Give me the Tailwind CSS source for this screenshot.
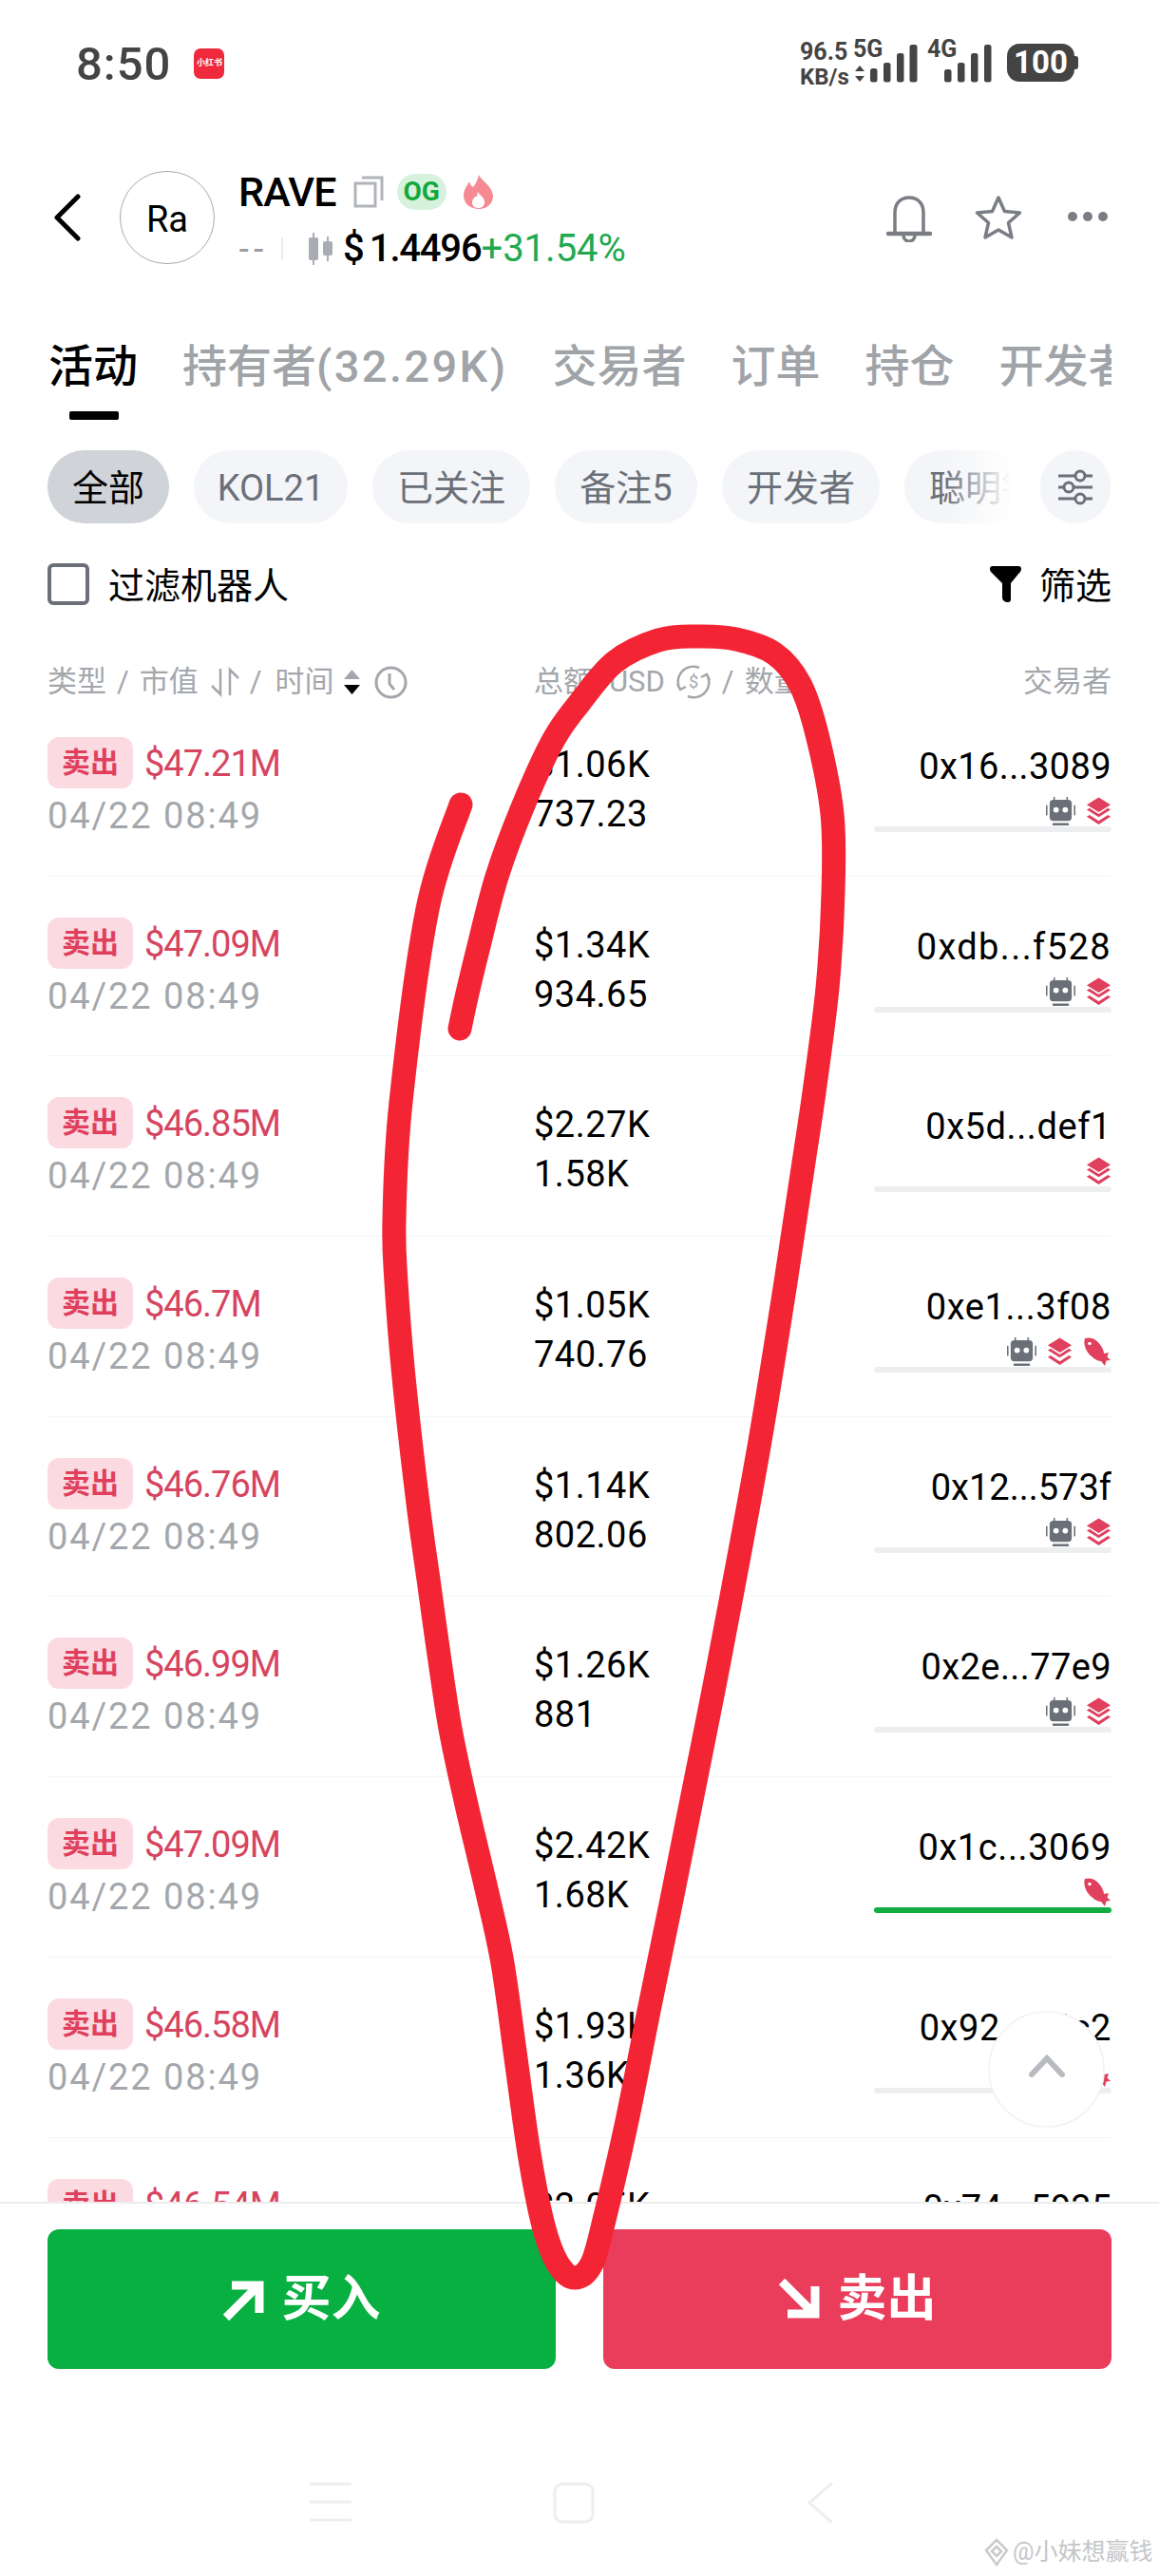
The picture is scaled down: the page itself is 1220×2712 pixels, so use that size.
<!DOCTYPE html>
<html lang="zh-CN">
<head>
  <meta charset="UTF-8" />
  <title>RAVE</title>
  <script src="https://cdn.jsdelivr.net/npm/@tailwindcss/browser@4"></script>
</head>
<body class="bg-white">
<svg class="hidden">
  <symbol id="robot" viewBox="0 0 32 32">
    <path d="M9 0v4M23 0v4" stroke="#6b7078" stroke-width="1.6"/>
    <rect x="4" y="3" width="24" height="23" rx="4" fill="#6b7078"/>
    <rect x="0" y="9" width="1.6" height="11" fill="#6b7078"/><rect x="30.4" y="9" width="1.6" height="11" fill="#6b7078"/>
    <rect x="7" y="28.5" width="18" height="2.5" rx="1" fill="#6b7078"/>
    <circle cx="11" cy="14" r="3" fill="#fff"/><circle cx="21" cy="14" r="3" fill="#fff"/>
  </symbol>
  <symbol id="stack" viewBox="0 0 28 30">
    <path d="M14 0l13 8-13 8L1 8z" fill="#e0405e"/>
    <path d="M1 13.5l3-1.8L14 18l10-6.300 3 1.800-13 8z" fill="#e0405e"/>
    <path d="M1 21l3-1.800L14 25.500l10-6.300 3 1.800-13 8.500z" fill="#e0405e"/>
  </symbol>
  <symbol id="fish" viewBox="0 0 30 30">
    <path d="M2 1C8-1 15 2 19 9c2 3 3 6 3 8l5-1-1.500 4.500L29 24l-4.500.5L23 30l-4-5c-2 0-6-1-10-5C3 15 0 7 2 1z" fill="#e0405e"/>
    <circle cx="7" cy="6.500" r="1.800" fill="#fff"/>
  </symbol>
</svg>

<div class="relative w-[1220px] h-[2712px] overflow-hidden flex flex-col bg-white text-black font-[Roboto,'Noto_Sans_CJK_SC',sans-serif]">

  <!-- Status bar -->
  <div class="h-[130px] shrink-0 flex justify-between pl-[80px] pr-[85px] pt-[42px] text-[#444444]">
    <div class="flex items-start gap-[24px]">
      <span class="text-[49px] leading-[52px] font-medium tracking-[1px]">8:50</span>
      <div class="mt-[9px] w-[32px] h-[32px] rounded-[7px] bg-[#ee2a3c] text-white text-[9px] font-bold flex items-center justify-center whitespace-nowrap">小红书</div>
    </div>
    <div class="flex items-start">
      <div class="w-[56px] text-[25px] leading-[26px] font-bold">
        <div>96.5</div>
        <div class="text-[24px]">KB/s</div>
      </div>
      <div class="w-[78px] relative h-[46px]">
        <span class="absolute left-0 top-0 text-[25px] leading-[20px] font-bold">5G</span>
        <svg class="absolute left-0 top-0" width="68" height="45" viewBox="0 0 68 45" fill="#444444">
          <path d="M7 27l5 6H2zM7 44l5-6H2z"/>
          <rect x="18" y="30" width="7.500" height="14.500" rx="2.500"/><rect x="32" y="24" width="7.500" height="20.500" rx="2.500"/><rect x="46" y="14" width="7.500" height="30.500" rx="2.500"/><rect x="59.500" y="5" width="8" height="39.500" rx="2.500"/>
        </svg>
      </div>
      <div class="w-[84px] relative h-[46px]">
        <span class="absolute left-0 top-0 text-[25px] leading-[20px] font-bold">4G</span>
        <svg class="absolute left-[18px] top-0" width="50" height="45" viewBox="0 0 50 45" fill="#444444">
          <rect x="0" y="31" width="7.500" height="13.500" rx="2.500"/><rect x="14" y="24" width="7.500" height="20.500" rx="2.500"/><rect x="28" y="14" width="7.500" height="30.500" rx="2.500"/><rect x="42" y="5" width="7.500" height="39.500" rx="2.500"/>
        </svg>
      </div>
      <div class="flex items-center mt-[4px]">
        <div class="w-[71px] h-[40px] rounded-[13px] bg-[#444444] text-white text-[33px] leading-[40px] font-bold text-center">100</div>
        <div class="w-[4px] h-[14px] rounded-r-[3px] bg-[#444444]"></div>
      </div>
    </div>
  </div>

  <!-- Token header -->
  <div class="mt-[50px] h-[98px] shrink-0 relative flex pl-[56px] pr-[54px]">
    <svg class="mt-[24px]" width="30" height="50" viewBox="0 0 30 50" fill="none" stroke="#000" stroke-width="5" stroke-linecap="round" stroke-linejoin="round"><path d="M26 3L4 25l22 22"/></svg>
    <div class="ml-[40px] w-[100px] h-[98px] rounded-full border border-[#a9a9a9] flex items-center justify-center pt-[5px] text-[38px]">Ra</div>
    <div class="ml-[25px] flex flex-col">
      <div class="flex items-center h-[44px]">
        <span class="text-[43px] leading-[44px] font-medium tracking-[-0.8px]">RAVE</span>
        <svg class="ml-[18px]" width="32" height="34" viewBox="0 0 32 34" fill="none" stroke="#b0b3b8" stroke-width="3"><rect x="2" y="8" width="21" height="24"/><path d="M9 2h21v24"/></svg>
        <div class="ml-[14px] w-[52px] h-[38px] rounded-full bg-[#d7f2dc] text-[#12a83d] text-[28px] leading-[38px] font-bold text-center">OG</div>
        <svg class="ml-[17px]" width="33" height="36" viewBox="0 0 33 36"><path d="M17 0c2 6 14 11 15 22 0 9-7 14-15 14S1 31 1 22c0-7 4-10 6-15 1 3 2 5 4 6 3-4 5-8 6-13z" fill="#f58a93"/><path d="M16 18c1 3 7 5 7 11 0 4-3 6-7 6s-6-3-6-6c0-3 2-4 3-6 1 1 2 1 3-5z" fill="#fff"/></svg>
      </div>
      <div class="flex items-center mt-[20px] h-[36px]">
        <span class="text-[#9a9da2] text-[34px] leading-[36px] font-medium tracking-[4px]">--</span>
        <div class="ml-[14px] w-[2px] h-[24px] bg-[#ececec]"></div>
        <svg class="ml-[24px]" width="30" height="34" viewBox="0 0 30 34" fill="#a9adb3"><rect x="7" y="0" width="2" height="34"/><rect x="3" y="5" width="10" height="24" rx="2"/><rect x="22" y="4" width="2" height="26"/><rect x="18" y="9" width="10" height="15" rx="2"/></svg>
        <span class="ml-[9px] text-[40px] leading-[36px] font-medium">$<span class="ml-[5px] tracking-[-1.2px]">1.4496</span></span>
        <span class="ml-0 text-[40px] leading-[36px] text-[#22a94f]">+31.54%</span>
      </div>
    </div>
    <svg class="absolute left-[933px] top-[25px]" width="48" height="50" viewBox="0 0 48 50" fill="none" stroke="#7a7e84" stroke-width="3.500" stroke-linecap="round"><path d="M9 40V19C9 9 15 3 24 3s15 6 15 16v21"/><path d="M2 41h44" stroke-width="4.500"/><path d="M18 43a6 6 0 0 0 12 0"/></svg>
    <svg class="absolute left-[1026px] top-[25px]" width="50" height="48" viewBox="0 0 50 48" fill="none" stroke="#7a7e84" stroke-width="3.500" stroke-linejoin="round"><path d="M25 3l6.500 14.500 16 1.500-12 10.500 3.500 15.500L25 37l-14 8 3.500-15.500L2.500 19l16-1.500z"/></svg>
    <svg class="absolute left-[1123px] top-[41px]" width="44" height="14" viewBox="0 0 44 14" fill="#7a7e84"><circle cx="6" cy="7" r="5"/><circle cx="22" cy="7" r="5"/><circle cx="38" cy="7" r="5"/></svg>
  </div>

  <!-- Tabs -->
  <div class="mt-[78px] ml-[51px] w-[1119px] h-[60px] shrink-0 overflow-hidden flex gap-[47px] whitespace-nowrap text-[47px] leading-[60px] font-medium text-[#a0a3a8]">
    <span class="text-black">活动</span>
    <span>持有者<span class="tracking-[2.4px]">(32.29K)</span></span>
    <span>交易者</span>
    <span>订单</span>
    <span>持仓</span>
    <span>开发者</span>
  </div>
  <div class="mt-[17px] ml-[73px] w-[52px] h-[9px] shrink-0 rounded-[2px] bg-black"></div>

  <!-- Category chips -->
  <div class="mt-[32px] ml-[50px] w-[1120px] h-[77px] shrink-0 flex gap-[26px] text-[38px] leading-[74px] text-[#6b7078] whitespace-nowrap">
    <div class="w-[128px] rounded-full bg-[#d0d3d8] text-black text-center pt-[3px]">全部</div>
    <div class="w-[162px] rounded-full bg-[#f3f5f8] text-center pt-[3px]">KOL21</div>
    <div class="w-[166px] rounded-full bg-[#f3f5f8] text-center pt-[3px]">已关注</div>
    <div class="w-[150px] rounded-full bg-[#f3f5f8] text-center pt-[3px]">备注5</div>
    <div class="w-[166px] rounded-full bg-[#f3f5f8] text-center pt-[3px]">开发者</div>
    <div class="relative w-[112px] rounded-l-full bg-[#f3f5f8] overflow-hidden pl-[26px] pt-[3px]">聪明钱
      <div class="absolute inset-y-0 right-0 w-[70px] bg-linear-to-r from-transparent to-white"></div>
    </div>
    <div class="ml-[5px] w-[74px] rounded-full bg-[#f3f5f8] flex items-center justify-center">
      <svg width="40" height="40" viewBox="0 0 40 40" fill="none" stroke="#6b7078" stroke-width="3"><path d="M2 8h18M30 8h8M2 20h6M18 20h20M2 32h18M30 32h8"/><circle cx="25" cy="8" r="5"/><circle cx="13" cy="20" r="5"/><circle cx="25" cy="32" r="5"/></svg>
    </div>
  </div>

  <!-- Filter row -->
  <div class="mt-[42px] mx-[50px] h-[44px] shrink-0 flex items-center justify-between text-[38px] leading-[44px]">
    <div class="flex items-center gap-[20px]">
      <div class="w-[44px] h-[44px] rounded-[6px] border-[4px] border-[#6b7078]"></div>
      <span class="pt-[3px]">过滤机器人</span>
    </div>
    <div class="flex items-center gap-[18px]">
      <svg width="35" height="40" viewBox="0 0 35 40"><path d="M1 4c0-2 1-3 3-3h27c2 0 3 1 3 3 0 2-1 3-2 4L23 19v17c0 2-1 3-3 3-3 0-6-2-6-5V19L3 8C2 7 1 6 1 4z" fill="#000"/></svg>
      <span class="pt-[3px]">筛选</span>
    </div>
  </div>

  <!-- Table head -->
  <div class="mt-[66px] mx-[50px] h-[30px] shrink-0 flex items-center text-[31px] leading-[30px] text-[#a3a7ac]">
    <div class="w-[512px] flex items-center">
      <span>类型</span><span class="ml-[11px]">/</span><span class="ml-[11px]">市值</span>
      <svg class="ml-[12px]" width="32" height="32" viewBox="0 0 32 32" fill="none" stroke="#a3a7ac" stroke-width="2.500"><path d="M11 2v27L2 20M21 30V3l9 9"/></svg>
      <span class="ml-[10px]">/</span><span class="ml-[14px]">时间</span>
      <svg class="ml-[9px]" width="19" height="30" viewBox="0 0 19 30"><path d="M9.500 2L18 12H1z" fill="#a3a7ac"/><path d="M9.500 28L18 18H1z" fill="#000"/></svg>
      <svg class="ml-[14px]" width="35" height="35" viewBox="0 0 35 35" fill="none" stroke="#a3a7ac" stroke-width="3"><circle cx="17.500" cy="17.500" r="15.500"/><path d="M16 8v11l5 6"/></svg>
    </div>
    <div class="flex items-center">
      <span>总额</span><span class="ml-[17px]">USD</span>
      <svg class="ml-[12px]" width="36" height="36" viewBox="0 0 36 36" fill="none" stroke="#a3a7ac" stroke-width="2.500"><path d="M4 26A16 16 0 0 1 24 3M32 10a16 16 0 0 1-20 23M1 20l3 6 6-3M35 16l-3-6-6 3"/><text x="18" y="24" text-anchor="middle" font-size="18" fill="#a3a7ac" stroke="none">$</text></svg>
      <span class="ml-[12px]">/</span><span class="ml-[11px]">数量</span>
    </div>
    <span class="ml-auto">交易者</span>
  </div>

  <!-- Trades -->
  <div class="flex-1 min-h-0 overflow-hidden mx-[50px]">
    <div class="h-[189.7px] border-b-[1.5px] border-[#f4f5f6] flex pt-[43px]">
      <div class="w-[512px]">
        <div class="flex items-center gap-[12px]"><div class="w-[90px] h-[54px] rounded-[12px] bg-[#fbdbe1] text-[#e0405e] text-[30px] leading-[54px] font-bold text-center">卖出</div><span class="pt-[2px] text-[38px] leading-[48px] tracking-[-1px] text-[#d6445f]">$47.21M</span></div>
        <div class="mt-[9px] text-[38px] leading-[40px] tracking-[1.9px] text-[#a3a7ac]">04/22 08:49</div>
      </div>
      <div class="pt-[3px] text-[38px] leading-[52px] tracking-[0.5px]"><div>$1.06K</div><div>737.23</div></div>
      <div class="ml-auto w-[250px] flex flex-col items-end pt-[9px]">
        <div class="text-[38px] leading-[44px] tracking-[0.4px] whitespace-nowrap">0x16...3089</div>
        <div class="mt-[10px] h-[31px] flex gap-[11px]"><svg width="31" height="31"><use href="#robot"/></svg><svg width="27" height="30"><use href="#stack"/></svg></div>
        <div class="w-full h-[6px] rounded-full bg-[#eceef0]"></div>
      </div>
    </div>
    <div class="h-[189.7px] border-b-[1.5px] border-[#f4f5f6] flex pt-[43px]">
      <div class="w-[512px]">
        <div class="flex items-center gap-[12px]"><div class="w-[90px] h-[54px] rounded-[12px] bg-[#fbdbe1] text-[#e0405e] text-[30px] leading-[54px] font-bold text-center">卖出</div><span class="pt-[2px] text-[38px] leading-[48px] tracking-[-1px] text-[#d6445f]">$47.09M</span></div>
        <div class="mt-[9px] text-[38px] leading-[40px] tracking-[1.9px] text-[#a3a7ac]">04/22 08:49</div>
      </div>
      <div class="pt-[3px] text-[38px] leading-[52px] tracking-[0.5px]"><div>$1.34K</div><div>934.65</div></div>
      <div class="ml-auto w-[250px] flex flex-col items-end pt-[9px]">
        <div class="text-[38px] leading-[44px] tracking-[1.4px] whitespace-nowrap">0xdb...f528</div>
        <div class="mt-[10px] h-[31px] flex gap-[11px]"><svg width="31" height="31"><use href="#robot"/></svg><svg width="27" height="30"><use href="#stack"/></svg></div>
        <div class="w-full h-[6px] rounded-full bg-[#eceef0]"></div>
      </div>
    </div>
    <div class="h-[189.7px] border-b-[1.5px] border-[#f4f5f6] flex pt-[43px]">
      <div class="w-[512px]">
        <div class="flex items-center gap-[12px]"><div class="w-[90px] h-[54px] rounded-[12px] bg-[#fbdbe1] text-[#e0405e] text-[30px] leading-[54px] font-bold text-center">卖出</div><span class="pt-[2px] text-[38px] leading-[48px] tracking-[-1px] text-[#d6445f]">$46.85M</span></div>
        <div class="mt-[9px] text-[38px] leading-[40px] tracking-[1.9px] text-[#a3a7ac]">04/22 08:49</div>
      </div>
      <div class="pt-[3px] text-[38px] leading-[52px] tracking-[0.5px]"><div>$2.27K</div><div>1.58K</div></div>
      <div class="ml-auto w-[250px] flex flex-col items-end pt-[9px]">
        <div class="text-[38px] leading-[44px] tracking-[0.6px] whitespace-nowrap">0x5d...def1</div>
        <div class="mt-[10px] h-[31px] flex gap-[11px]"><svg width="27" height="30"><use href="#stack"/></svg></div>
        <div class="w-full h-[6px] rounded-full bg-[#eceef0]"></div>
      </div>
    </div>
    <div class="h-[189.7px] border-b-[1.5px] border-[#f4f5f6] flex pt-[43px]">
      <div class="w-[512px]">
        <div class="flex items-center gap-[12px]"><div class="w-[90px] h-[54px] rounded-[12px] bg-[#fbdbe1] text-[#e0405e] text-[30px] leading-[54px] font-bold text-center">卖出</div><span class="pt-[2px] text-[38px] leading-[48px] tracking-[-1px] text-[#d6445f]">$46.7M</span></div>
        <div class="mt-[9px] text-[38px] leading-[40px] tracking-[1.9px] text-[#a3a7ac]">04/22 08:49</div>
      </div>
      <div class="pt-[3px] text-[38px] leading-[52px] tracking-[0.5px]"><div>$1.05K</div><div>740.76</div></div>
      <div class="ml-auto w-[250px] flex flex-col items-end pt-[9px]">
        <div class="text-[38px] leading-[44px] tracking-[0.6px] whitespace-nowrap">0xe1...3f08</div>
        <div class="mt-[10px] h-[31px] flex gap-[11px]"><svg width="31" height="31"><use href="#robot"/></svg><svg width="27" height="30"><use href="#stack"/></svg><svg width="30" height="30"><use href="#fish"/></svg></div>
        <div class="w-full h-[6px] rounded-full bg-[#eceef0]"></div>
      </div>
    </div>
    <div class="h-[189.7px] border-b-[1.5px] border-[#f4f5f6] flex pt-[43px]">
      <div class="w-[512px]">
        <div class="flex items-center gap-[12px]"><div class="w-[90px] h-[54px] rounded-[12px] bg-[#fbdbe1] text-[#e0405e] text-[30px] leading-[54px] font-bold text-center">卖出</div><span class="pt-[2px] text-[38px] leading-[48px] tracking-[-1px] text-[#d6445f]">$46.76M</span></div>
        <div class="mt-[9px] text-[38px] leading-[40px] tracking-[1.9px] text-[#a3a7ac]">04/22 08:49</div>
      </div>
      <div class="pt-[3px] text-[38px] leading-[52px] tracking-[0.5px]"><div>$1.14K</div><div>802.06</div></div>
      <div class="ml-auto w-[250px] flex flex-col items-end pt-[9px]">
        <div class="text-[38px] leading-[44px] whitespace-nowrap">0x12...573f</div>
        <div class="mt-[10px] h-[31px] flex gap-[11px]"><svg width="31" height="31"><use href="#robot"/></svg><svg width="27" height="30"><use href="#stack"/></svg></div>
        <div class="w-full h-[6px] rounded-full bg-[#eceef0]"></div>
      </div>
    </div>
    <div class="h-[189.7px] border-b-[1.5px] border-[#f4f5f6] flex pt-[43px]">
      <div class="w-[512px]">
        <div class="flex items-center gap-[12px]"><div class="w-[90px] h-[54px] rounded-[12px] bg-[#fbdbe1] text-[#e0405e] text-[30px] leading-[54px] font-bold text-center">卖出</div><span class="pt-[2px] text-[38px] leading-[48px] tracking-[-1px] text-[#d6445f]">$46.99M</span></div>
        <div class="mt-[9px] text-[38px] leading-[40px] tracking-[1.9px] text-[#a3a7ac]">04/22 08:49</div>
      </div>
      <div class="pt-[3px] text-[38px] leading-[52px] tracking-[0.5px]"><div>$1.26K</div><div>881</div></div>
      <div class="ml-auto w-[250px] flex flex-col items-end pt-[9px]">
        <div class="text-[38px] leading-[44px] tracking-[0.4px] whitespace-nowrap">0x2e...77e9</div>
        <div class="mt-[10px] h-[31px] flex gap-[11px]"><svg width="31" height="31"><use href="#robot"/></svg><svg width="27" height="30"><use href="#stack"/></svg></div>
        <div class="w-full h-[6px] rounded-full bg-[#eceef0]"></div>
      </div>
    </div>
    <div class="h-[189.7px] border-b-[1.5px] border-[#f4f5f6] flex pt-[43px]">
      <div class="w-[512px]">
        <div class="flex items-center gap-[12px]"><div class="w-[90px] h-[54px] rounded-[12px] bg-[#fbdbe1] text-[#e0405e] text-[30px] leading-[54px] font-bold text-center">卖出</div><span class="pt-[2px] text-[38px] leading-[48px] tracking-[-1px] text-[#d6445f]">$47.09M</span></div>
        <div class="mt-[9px] text-[38px] leading-[40px] tracking-[1.9px] text-[#a3a7ac]">04/22 08:49</div>
      </div>
      <div class="pt-[3px] text-[38px] leading-[52px] tracking-[0.5px]"><div>$2.42K</div><div>1.68K</div></div>
      <div class="ml-auto w-[250px] flex flex-col items-end pt-[9px]">
        <div class="text-[38px] leading-[44px] tracking-[0.6px] whitespace-nowrap">0x1c...3069</div>
        <div class="mt-[10px] h-[31px] flex gap-[11px]"><svg width="30" height="30"><use href="#fish"/></svg></div>
        <div class="w-full h-[6px] rounded-full bg-[#12ad42]"></div>
      </div>
    </div>
    <div class="h-[189.7px] border-b-[1.5px] border-[#f4f5f6] flex pt-[43px]">
      <div class="w-[512px]">
        <div class="flex items-center gap-[12px]"><div class="w-[90px] h-[54px] rounded-[12px] bg-[#fbdbe1] text-[#e0405e] text-[30px] leading-[54px] font-bold text-center">卖出</div><span class="pt-[2px] text-[38px] leading-[48px] tracking-[-1px] text-[#d6445f]">$46.58M</span></div>
        <div class="mt-[9px] text-[38px] leading-[40px] tracking-[1.9px] text-[#a3a7ac]">04/22 08:49</div>
      </div>
      <div class="pt-[3px] text-[38px] leading-[52px] tracking-[0.5px]"><div>$1.93K</div><div>1.36K</div></div>
      <div class="ml-auto w-[250px] flex flex-col items-end pt-[9px]">
        <div class="text-[38px] leading-[44px] tracking-[0.6px] whitespace-nowrap">0x92...e4c2</div>
        <div class="mt-[10px] h-[31px] flex gap-[11px]"><svg width="30" height="30"><use href="#fish"/></svg></div>
        <div class="w-full h-[6px] rounded-full bg-[#eceef0]"></div>
      </div>
    </div>
    <div class="h-[189.7px] flex pt-[43px]">
      <div class="w-[512px]">
        <div class="flex items-center gap-[12px]"><div class="w-[90px] h-[54px] rounded-[12px] bg-[#fbdbe1] text-[#e0405e] text-[30px] leading-[54px] font-bold text-center">卖出</div><span class="pt-[2px] text-[38px] leading-[48px] tracking-[-1px] text-[#d6445f]">$46.54M</span></div>
      </div>
      <div class="pt-[3px] text-[38px] leading-[52px] tracking-[0.5px]"><div>$2.05K</div></div>
      <div class="ml-auto w-[250px] flex flex-col items-end pt-[9px]">
        <div class="text-[38px] leading-[44px] whitespace-nowrap">0x74...5935</div>
      </div>
    </div>
  </div>

  <!-- Buy / sell -->
  <div class="h-[394px] shrink-0 bg-white border-t-2 border-[#ececec] flex flex-col">
    <div class="mt-[27px] mx-[50px] flex gap-[50px] text-white text-[52px] font-bold">
      <div class="flex-1 h-[147px] rounded-[12px] bg-[#08b041] flex items-center justify-center gap-[16px]">
        <svg width="46" height="46" viewBox="0 0 46 46" fill="none" stroke="#fff" stroke-width="9"><path d="M4 42L38 8M10 8h29v29"/></svg>
        <span>买入</span>
      </div>
      <div class="flex-1 h-[147px] rounded-[12px] bg-[#e93d5b] flex items-center justify-center gap-[16px]">
        <svg width="46" height="46" viewBox="0 0 46 46" fill="none" stroke="#fff" stroke-width="9"><path d="M4 4l34 34M39 9v29H10"/></svg>
        <span>卖出</span>
      </div>
    </div>
    <!-- Android nav -->
    <div class="mt-[119px] h-[44px] relative">
      <svg class="absolute left-[326px] top-0" width="44" height="42" viewBox="0 0 44 42" stroke="#eeeeee" stroke-width="3"><path d="M0 2h44M0 21h44M0 40h44"/></svg>
      <svg class="absolute left-[582px] top-0" width="44" height="44" viewBox="0 0 44 44" fill="none" stroke="#eeeeee" stroke-width="3"><rect x="2" y="2" width="40" height="40" rx="8"/></svg>
      <svg class="absolute left-[850px] top-0" width="28" height="44" viewBox="0 0 28 44" fill="none" stroke="#eeeeee" stroke-width="3"><path d="M26 1L2 22l24 21"/></svg>
    </div>
  </div>

  <!-- Scroll to top -->
  <div class="absolute left-[1040px] top-[2117px] w-[123px] h-[123px] rounded-full bg-white border-2 border-[#f3f4f5] flex items-center justify-center">
    <svg class="mb-[8px]" width="38" height="24" viewBox="0 0 38 24" fill="none" stroke="#b8bcc0" stroke-width="6" stroke-linecap="round"><path d="M3 21L19 4l16 17"/></svg>
  </div>

  <!-- Hand-drawn red mark over the screenshot -->
  <svg class="absolute left-0 top-0 pointer-events-none" width="1220" height="2712" viewBox="0 0 1220 2712" fill="none">
    <path id="ink" stroke="#f32535" stroke-width="25" stroke-linecap="round" stroke-linejoin="round"/>
  </svg>

  <!-- Watermark -->
  <div class="absolute left-[1035px] top-[2672px] flex items-center gap-[3px] text-[25px] leading-[30px] text-[#c4c6c9] whitespace-nowrap">
    <svg width="28" height="30" viewBox="0 0 28 30" fill="none" stroke="#c8cacc" stroke-width="2.500"><path d="M14 2l11 11-11 15L3 13zM14 9l5 5-5 5-5-5z"/></svg>
    <span>@小妹想赢钱</span>
  </div>
</div>

<script>
  // smooth the traced points of the red pen stroke (catmull-rom to bezier)
  const pts = [[485,847],[450,957],[422,1160],[415,1283],[417,1350],[425,1450],[440,1583],[452,1670],[461,1735],[474,1820],[491,1900],[513,1993],[529,2067],[543,2167],[557,2267],[572,2343],[587,2383],[605,2398],[623,2383],[637,2333],[660,2233],[683,2117],[707,2000],[727,1900],[750,1785],[772,1670],[800,1517],[827,1350],[847,1217],[857,1150],[871,1040],[877,940],[876,857],[860,773],[842,720],[815,688],[775,673],[733,670],[693,674],[647,697],[610,740],[582,780],[550,850],[523,923],[503,1000],[491,1050],[484,1083]];
  let d = `M${pts[0]}`;
  for (let i = 0; i < pts.length - 1; i++) {
    const a = pts[i - 1] || pts[i], b = pts[i], c = pts[i + 1], e = pts[i + 2] || c;
    d += `C${b[0] + (c[0] - a[0]) / 6},${b[1] + (c[1] - a[1]) / 6} ${c[0] - (e[0] - b[0]) / 6},${c[1] - (e[1] - b[1]) / 6} ${c[0]},${c[1]}`;
  }
  document.getElementById('ink').setAttribute('d', d);
</script>
</body>
</html>
